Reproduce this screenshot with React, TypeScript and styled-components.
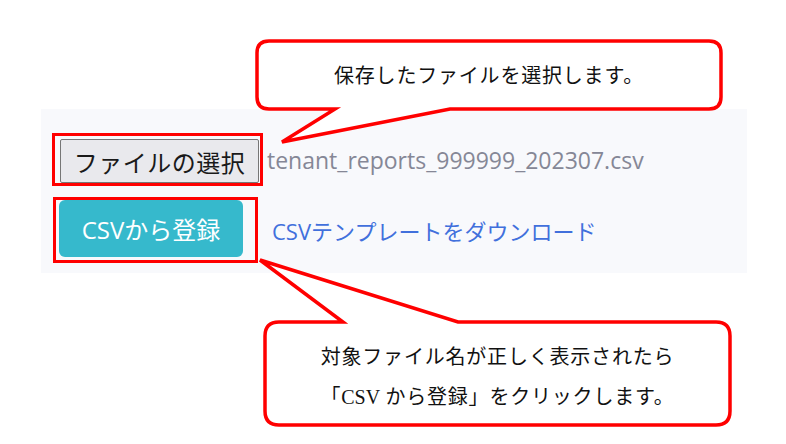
import React from "react";
import styled, { createGlobalStyle } from "styled-components";

const GlobalStyle = createGlobalStyle`
  html, body {
    margin: 0;
    padding: 0;
    background: #ffffff;
  }
  body {
    font-family: "Open Sans", "Noto Sans CJK JP", sans-serif;
  }
`;

const Page = styled.div`
  position: relative;
  width: 786px;
  height: 444px;
  overflow: hidden;
  padding-top: 109px;
  padding-left: 41px;
  box-sizing: border-box;
`;

const Panel = styled.div`
  width: 706px;
  height: 164px;
  box-sizing: border-box;
  background: #f8f9fc;
  padding: 24px 0 0 11px;
  display: flex;
  flex-direction: column;
  gap: 11px;
`;

const Row = styled.div<{ $gap: number; $indent?: number }>`
  display: flex;
  align-items: center;
  gap: ${(p) => p.$gap}px;
  margin-left: ${(p) => p.$indent ?? 0}px;
`;

const Highlight = styled.span<{ $pad: string }>`
  display: inline-flex;
  border: 3px solid #ff0000;
  padding: ${(p) => p.$pad};
`;

const FileButton = styled.button`
  height: 44px;
  width: 199px;
  padding: 0;
  background: #e9e9ed;
  border: 1px solid #767676;
  border-radius: 2px;
  color: #1a1a1a;
  font-family: "Noto Sans CJK JP", sans-serif;
  font-size: 24px;
  letter-spacing: 0.5px;
`;

const FileName = styled.span`
  color: #858796;
  font-size: 23px;
  font-family: "Open Sans", "Noto Sans CJK JP", sans-serif;
`;

const SubmitButton = styled.button`
  height: 57px;
  width: 184px;
  border: none;
  border-radius: 6px;
  background: #36b9cc;
  color: #ffffff;
  font-family: "Open Sans", "Noto Sans CJK JP", sans-serif;
  font-size: 24px;
  padding: 0;
`;

const TemplateLink = styled.a`
  color: #4170dc;
  font-size: 22px;
  text-decoration: none;
  font-family: "Open Sans", "Noto Sans CJK JP", sans-serif;
`;

const Bubble = styled.div<{ $left: number; $top: number; $w: number; $h: number }>`
  position: absolute;
  left: ${(p) => p.$left}px;
  top: ${(p) => p.$top}px;
  width: ${(p) => p.$w}px;
  height: ${(p) => p.$h}px;
  display: flex;
  flex-direction: column;
  align-items: center;
  justify-content: center;
`;

const BubbleShape = styled.svg`
  position: absolute;
  left: 0;
  top: 0;
  overflow: visible;
`;

const BubbleText = styled.div<{ $pt?: number }>`
  position: relative;
  font-family: "Noto Sans CJK JP", sans-serif;
  font-weight: 400;
  font-size: 20px;
  letter-spacing: 0.8px;
  line-height: 40px;
  color: #111111;
  text-align: center;
  padding-top: ${(p) => p.$pt ?? 0}px;
`;

const Latin = styled.span`
  font-family: "Liberation Serif", serif;
  letter-spacing: 0;
`;

const RED = "#ff0000";

export default function App() {
  return (
    <>
      <GlobalStyle />
      <Page>
        <Panel>
          <Row $gap={4}>
            <Highlight $pad="3px 1px 0 5px">
              <FileButton>ファイルの選択</FileButton>
            </Highlight>
            <FileName>tenant_reports_999999_202307.csv</FileName>
          </Row>
          <Row $gap={14} $indent={1}>
            <Highlight $pad="0 12px 3px 3px">
              <SubmitButton>CSVから登録</SubmitButton>
            </Highlight>
            <TemplateLink href="#">CSVテンプレートをダウンロード</TemplateLink>
          </Row>
        </Panel>

        <Bubble $left={257} $top={41} $w={464} $h={68}>
          <BubbleShape width={464} height={68}>
            <path
              d="M 12 0 H 452 Q 464 0 464 12 V 56 Q 464 68 452 68 H 193 L 25 101 L 78 68 H 12 Q 0 68 0 56 V 12 Q 0 0 12 0 Z"
              fill="#ffffff"
              stroke={RED}
              strokeWidth={3.5}
            />
          </BubbleShape>
          <BubbleText>保存したファイルを選択します。</BubbleText>
        </Bubble>

        <Bubble $left={265} $top={322} $w={465} $h={103}>
          <BubbleShape width={465} height={103}>
            <path
              d="M 14 0 H 78 L -5 -62 L 193 0 H 451 Q 465 0 465 14 V 89 Q 465 103 451 103 H 14 Q 0 103 0 89 V 14 Q 0 0 14 0 Z"
              fill="#ffffff"
              stroke={RED}
              strokeWidth={3.5}
            />
          </BubbleShape>
          <BubbleText $pt={6}>
            対象ファイル名が正しく表示されたら
            <br />
            「<Latin>CSV</Latin> から登録」をクリックします。
          </BubbleText>
        </Bubble>
      </Page>
    </>
  );
}
